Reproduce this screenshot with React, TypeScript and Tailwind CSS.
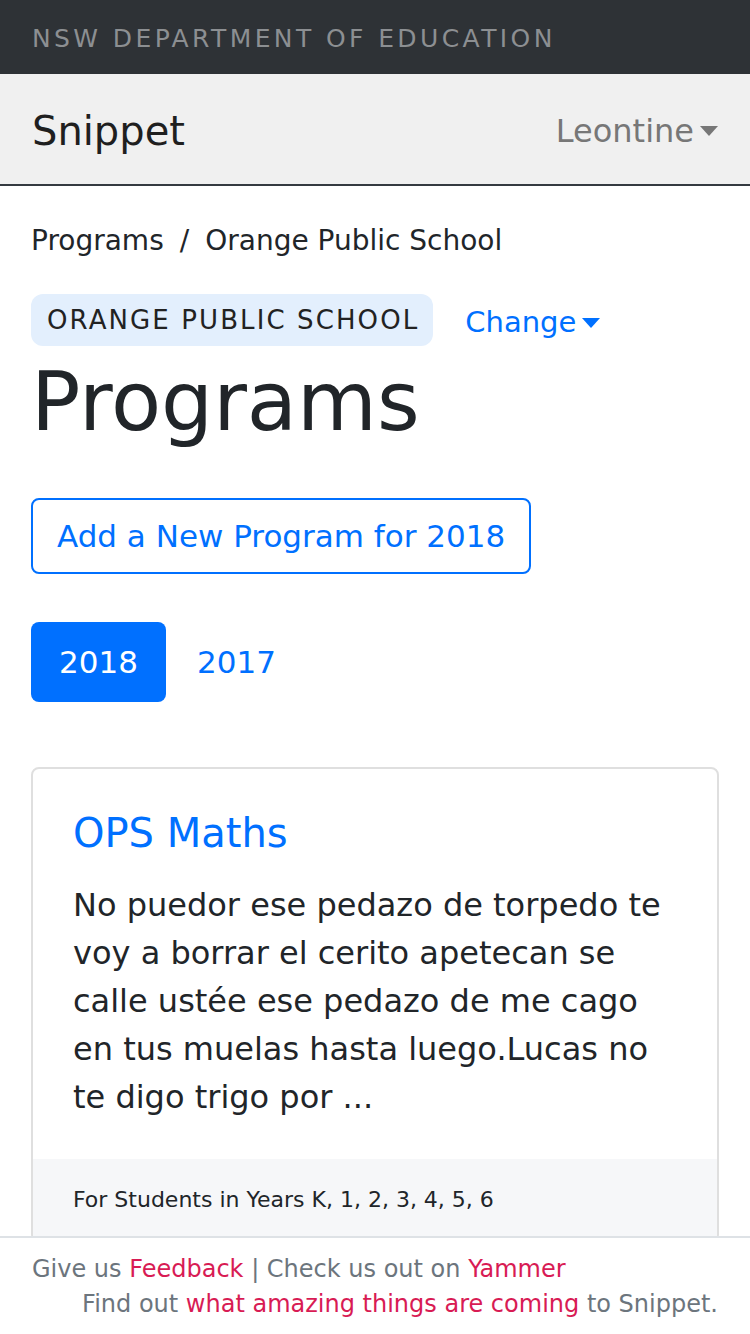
const font = "font-['DejaVu_Sans','Liberation_Sans',sans-serif]";

const Caret = () => (
  <span className="ml-[6px] inline-block h-0 w-0 border-x-[9px] border-t-[10px] border-x-transparent border-t-current align-middle" />
);

export default function App() {
  return (
    <div className={`${font} min-h-[1334px] bg-white text-[#212529]`}>
      <div className="flex h-[74px] items-center bg-[#2e3236] px-[32px] pt-[4px]">
        <span className="text-[25px] tracking-[3.4px] text-[#8c8f92]">NSW DEPARTMENT OF EDUCATION</span>
      </div>

      <nav className="flex h-[112px] items-center justify-between border-b-2 border-[#343a40] bg-[#f0f0f0] px-[32px] pt-[3px]">
        <span className="text-[40px] text-[#1f1f1f]">Snippet</span>
        <span className="flex items-center text-[32px] text-[#777]">
          Leontine
          <Caret />
        </span>
      </nav>

      <main className="px-[31px] pb-[160px]">
        <div className="mt-[34px] flex items-center gap-[16px] text-[28px] leading-[42px]">
          <span>Programs</span>
          <span>/</span>
          <span>Orange Public School</span>
        </div>

        <div className="mt-[32px] flex items-center gap-[32px]">
          <span className="flex h-[52px] items-center rounded-[12px] bg-[#e3effd] pr-[14px] pl-[16px] text-[26px] tracking-[2.1px] text-[#222]">
            ORANGE PUBLIC SCHOOL
          </span>
          <span className="flex items-center pt-[5px] text-[29px] text-[#0070ff]">
            Change
            <Caret />
          </span>
        </div>

        <h1 className="mt-[8px] text-[82px] leading-[96px] text-[#212529]">Programs</h1>

        <button className="mt-[48px] flex h-[76px] items-center rounded-[8px] border-2 border-[#0070ff] px-[24px] text-[31px] text-[#0070ff]">
          Add a New Program for 2018
        </button>

        <div className="mt-[48px] flex items-center">
          <span className="flex h-[80px] w-[135px] items-center justify-center rounded-[8px] bg-[#0070ff] text-[31px] text-white">
            2018
          </span>
          <span className="flex h-[80px] items-center px-[31px] text-[31px] text-[#0070ff]">2017</span>
        </div>

        <div className="mt-[65px] overflow-hidden rounded-[8px] border-2 border-[#dfdfdf]">
          <div className="px-[40px] pt-[40px] pb-[38px]">
            <h5 className="text-[40px] leading-[48px] text-[#0070ff]">OPS Maths</h5>
            <p className="mt-[24px] text-[32px] leading-[48px] text-[#212529]">
              No puedor ese pedazo de torpedo te voy a borrar el cerito apetecan se calle ustée ese pedazo de me cago en tus muelas hasta luego.Lucas no te digo trigo por ...
            </p>
          </div>
          <div className="bg-[#f6f7f9] px-[40px] py-[24px] text-[22px] leading-[34px] text-[#212529]">
            For Students in Years K, 1, 2, 3, 4, 5, 6
          </div>
        </div>
      </main>

      <footer className="fixed inset-x-0 bottom-0 border-t-2 border-[#dee2e6] bg-white px-[32px] pt-[14px] pb-[12px] text-[24px] leading-[35px] text-[#6c757d]">
        <div>
          Give us <span className="text-[#d81b54]">Feedback</span> | Check us out on{" "}
          <span className="text-[#d81b54]">Yammer</span>
        </div>
        <div className="text-right">
          Find out <span className="text-[#d81b54]">what amazing things are coming</span> to Snippet.
        </div>
      </footer>
    </div>
  );
}
